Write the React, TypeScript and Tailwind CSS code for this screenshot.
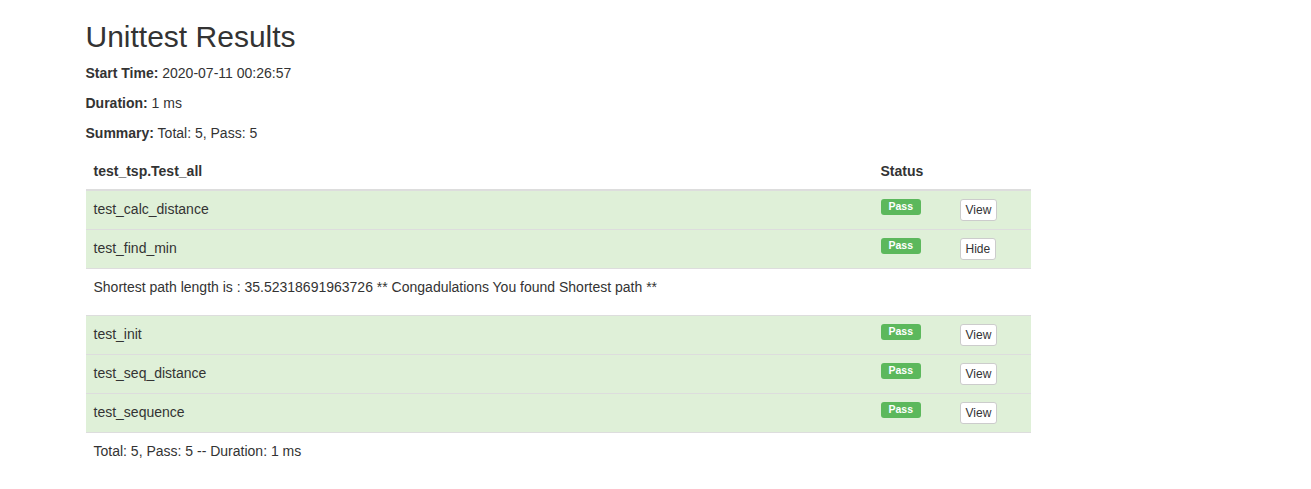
import React from "react";

type Row = { name: string; btn: string };

const rowsA: Row[] = [
  { name: "test_calc_distance", btn: "View" },
  { name: "test_find_min", btn: "Hide" },
];
const rowsB: Row[] = [
  { name: "test_init", btn: "View" },
  { name: "test_seq_distance", btn: "View" },
  { name: "test_sequence", btn: "View" },
];

function TestRow({ r }: { r: Row }) {
  return (
    <tr className="bg-[#dff0d8]">
      <td className="border-t border-[#ddd] px-2 py-2 align-top leading-5">{r.name}</td>
      <td className="border-t border-[#ddd] px-2 py-2 align-top leading-5">
        <span className="inline-block align-top rounded-[3px] bg-[#5cb85c] px-[8px] pt-[1px] pb-[3px] text-[10.5px] font-bold leading-[12px] text-white">
          Pass
        </span>
      </td>
      <td className="border-t border-[#ddd] px-2 py-2 align-top leading-5">
        <button className="inline-block align-top rounded-[3px] border border-[#ccc] bg-white px-[5px] py-[1px] text-[12px] leading-[18px] text-[#333]">
          {r.btn}
        </button>
      </td>
    </tr>
  );
}

export default function App() {
  return (
    <div
      className="min-h-[489px] bg-white text-[14px] leading-5 text-[#333]"
      style={{ fontFamily: '"Liberation Sans", Arial, sans-serif' }}
    >
      <div className="mx-auto w-[1170px] px-[15px]">
        <h1 className="mt-5 mb-[10px] text-[30px] font-normal leading-[33px]">Unittest Results</h1>
        <p className="mb-[10px]">
          <strong>Start Time:</strong> 2020-07-11 00:26:57
        </p>
        <p className="mb-[10px]">
          <strong>Duration:</strong> 1 ms
        </p>
        <p className="mb-[10px]">
          <strong>Summary:</strong> Total: 5, Pass: 5
        </p>
        <table className="w-[945px] border-collapse">
          <colgroup>
            <col className="w-[787px]" />
            <col className="w-[79px]" />
            <col className="w-[79px]" />
          </colgroup>
          <thead>
            <tr>
              <th className="border-b-2 border-[#ddd] px-2 py-2 text-left align-bottom font-bold leading-5">
                test_tsp.Test_all
              </th>
              <th className="border-b-2 border-[#ddd] px-2 py-2 text-left align-bottom font-bold leading-5">
                Status
              </th>
              <th className="border-b-2 border-[#ddd] px-2 py-2 text-left align-bottom leading-5"></th>
            </tr>
          </thead>
          <tbody>
            {rowsA.map((r) => (
              <TestRow key={r.name} r={r} />
            ))}
            <tr>
              <td colSpan={3} className="border-t border-[#ddd] px-2 pt-2 pb-[18px] align-top leading-5">
                Shortest path length is : 35.52318691963726 ** Congadulations You found Shortest path **
              </td>
            </tr>
            {rowsB.map((r) => (
              <TestRow key={r.name} r={r} />
            ))}
            <tr>
              <td colSpan={3} className="border-t border-[#ddd] px-2 py-2 align-top leading-5">
                Total: 5, Pass: 5 -- Duration: 1 ms
              </td>
            </tr>
          </tbody>
        </table>
      </div>
    </div>
  );
}
